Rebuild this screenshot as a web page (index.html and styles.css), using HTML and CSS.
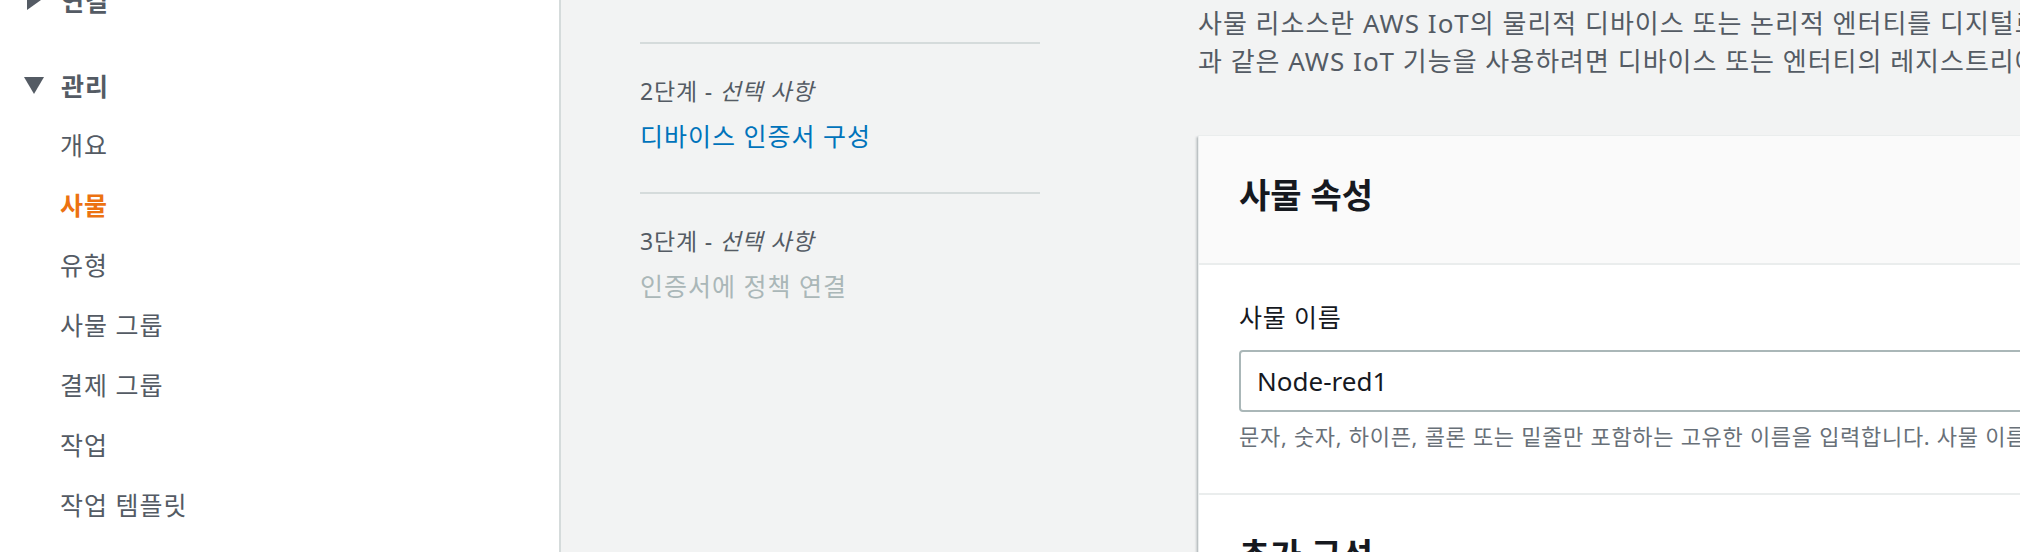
FILE: index.html
```html
<!DOCTYPE html>
<html lang="ko">
<head>
    <meta charset="UTF-8">
    <meta name="viewport" content="width=device-width, initial-scale=1.0">
    <title>사물 생성 - AWS IoT</title>
    <link rel="stylesheet" href="styles.css">
</head>
<body>
    <nav class="sidebar">
        <ul class="nav-list">
            <li class="nav-group collapsed">
                <div class="nav-header">
                    <span class="caret">
                        <svg width="20" height="20" viewBox="0 0 20 20"><polygon points="3,0 17,10 3,20" /></svg>
                    </span>
                    연결
                </div>
            </li>
            <li class="nav-group">
                <div class="nav-header">
                    <span class="caret">
                        <svg width="20" height="17" viewBox="0 0 20 17"><polygon points="0,0 20,0 10,17" /></svg>
                    </span>
                    관리
                </div>
                <ul class="nav-items">
                    <li>개요</li>
                    <li class="active">사물</li>
                    <li>유형</li>
                    <li>사물 그룹</li>
                    <li>결제 그룹</li>
                    <li>작업</li>
                    <li>작업 템플릿</li>
                </ul>
            </li>
        </ul>
    </nav>

    <main class="main">
        <ol class="steps">
            <li class="step">
                <div class="step-label">1단계</div>
                <div class="step-title current">사물 속성 지정</div>
            </li>
            <li class="step">
                <div class="step-label">2단계 - <em>선택 사항</em></div>
                <div class="step-title link">디바이스 인증서 구성</div>
            </li>
            <li class="step">
                <div class="step-label">3단계 - <em>선택 사항</em></div>
                <div class="step-title disabled">인증서에 정책 연결</div>
            </li>
        </ol>

        <div class="content">
            <p class="intro">
                사물 리소스란 AWS IoT의 물리적 디바이스 또는 논리적 엔터티를 디지털로 표현한 것입니다. 디바이스 또는 논리적 엔터티가 섀도우 및 규칙 엔진<br>과 같은 AWS IoT 기능을 사용하려면 디바이스 또는 엔터티의 레지스트리에 사물 리소스가 있어야 합니다.
            </p>

            <section class="card">
                <div class="card-header">
                    <h2>사물 속성</h2>
                </div>
                <div class="card-section">
                    <label class="field-label" for="thing-name">사물 이름</label>
                    <input type="text" id="thing-name" class="text-input" value="Node-red1">
                    <p class="hint">문자, 숫자, 하이픈, 콜론 또는 밑줄만 포함하는 고유한 이름을 입력합니다. 사물 이름에는 공백을 포함할 수 없습니다.</p>
                </div>
                <div class="card-section">
                    <h3>추가 구성</h3>
                </div>
            </section>
        </div>
    </main>
</body>
</html>
```

FILE: styles.css
```css
body {
    margin: 0;
    height: 552px;
    display: flex;
    overflow: hidden;
    font-family: "Noto Sans", "Noto Sans CJK KR", sans-serif;
    font-size: 24px;
    color: #16191f;
    background-color: #f2f3f3;
}

ul,
ol {
    list-style: none;
    margin: 0;
    padding: 0;
}

/* Left navigation */
.sidebar {
    flex: none;
    width: 559px;
    background-color: #ffffff;
    border-right: 2px solid #d5dbdb;
    overflow: hidden;
}

.nav-list {
    margin-top: -30px;
}

.nav-group {
    margin-bottom: 25px;
}

.nav-header {
    display: flex;
    align-items: center;
    height: 60px;
    padding-left: 24px;
    font-size: 25px;
    font-weight: 700;
    letter-spacing: 1px;
    color: #545b64;
}

.caret {
    display: flex;
    justify-content: center;
    width: 20px;
    margin-right: 17px;
}

.caret svg {
    fill: #545b64;
}

.nav-items li {
    height: 60px;
    line-height: 60px;
    padding-left: 60px;
    font-size: 25px;
    letter-spacing: 1px;
    color: #545b64;
}

.nav-items li.active {
    color: #ec7211;
    font-weight: 700;
}

/* Main area */
.main {
    flex: none;
    display: flex;
    align-items: flex-start;
    gap: 158px;
    padding-left: 79px;
}

.steps {
    flex: none;
    width: 400px;
    margin-top: -108px;
}

.step {
    border-top: 2px solid #d5dbdb;
    padding: 32px 0 38px;
}

.step:first-child {
    border-top: none;
    padding-top: 34px;
}

.step-label {
    font-size: 23px;
    line-height: 30px;
    letter-spacing: 0.8px;
    color: #545b64;
}

.step-label em {
    font-style: italic;
}

.step-title {
    margin-top: 12px;
    font-size: 25px;
    line-height: 36px;
    letter-spacing: 1px;
}

.step-title.current {
    font-weight: 700;
    color: #16191f;
}

.step-title.link {
    color: #0073bb;
}

.step-title.disabled {
    color: #aab7b8;
}

.content {
    flex: none;
    width: 2400px;
    padding-top: 4px;
}

.intro {
    margin: 0;
    font-size: 26px;
    line-height: 38px;
    letter-spacing: 1px;
    color: #545b64;
}

/* Card */
.card {
    margin-top: 55px;
    background-color: #ffffff;
    border: 1px solid #eaeded;
    box-shadow: 0 2px 2px rgba(0, 28, 36, 0.3), -2px 2px 2px rgba(0, 28, 36, 0.15);
}

.card-header {
    background-color: #fafafa;
    border-bottom: 2px solid #eaeded;
    padding: 39px 40px 48px;
}

.card-header h2,
.card-section h3 {
    margin: 0;
    font-size: 34px;
    line-height: 40px;
    font-weight: 700;
    color: #16191f;
}

.card-section {
    padding: 34px 40px 42px;
    border-bottom: 2px solid #eaeded;
}

.card-section + .card-section {
    padding-top: 40px;
}

.field-label {
    display: block;
    font-size: 25px;
    line-height: 36px;
    letter-spacing: 0.8px;
    color: #16191f;
}

.text-input {
    display: block;
    box-sizing: border-box;
    width: 100%;
    height: 62px;
    margin-top: 15px;
    padding: 0 16px;
    border: 2px solid #aab7b8;
    border-radius: 4px;
    font-family: inherit;
    font-size: 26px;
    color: #16191f;
    background-color: #ffffff;
}

.hint {
    margin: 9px 0 0;
    font-size: 22px;
    line-height: 30px;
    letter-spacing: 0.7px;
    color: #687078;
}
```
